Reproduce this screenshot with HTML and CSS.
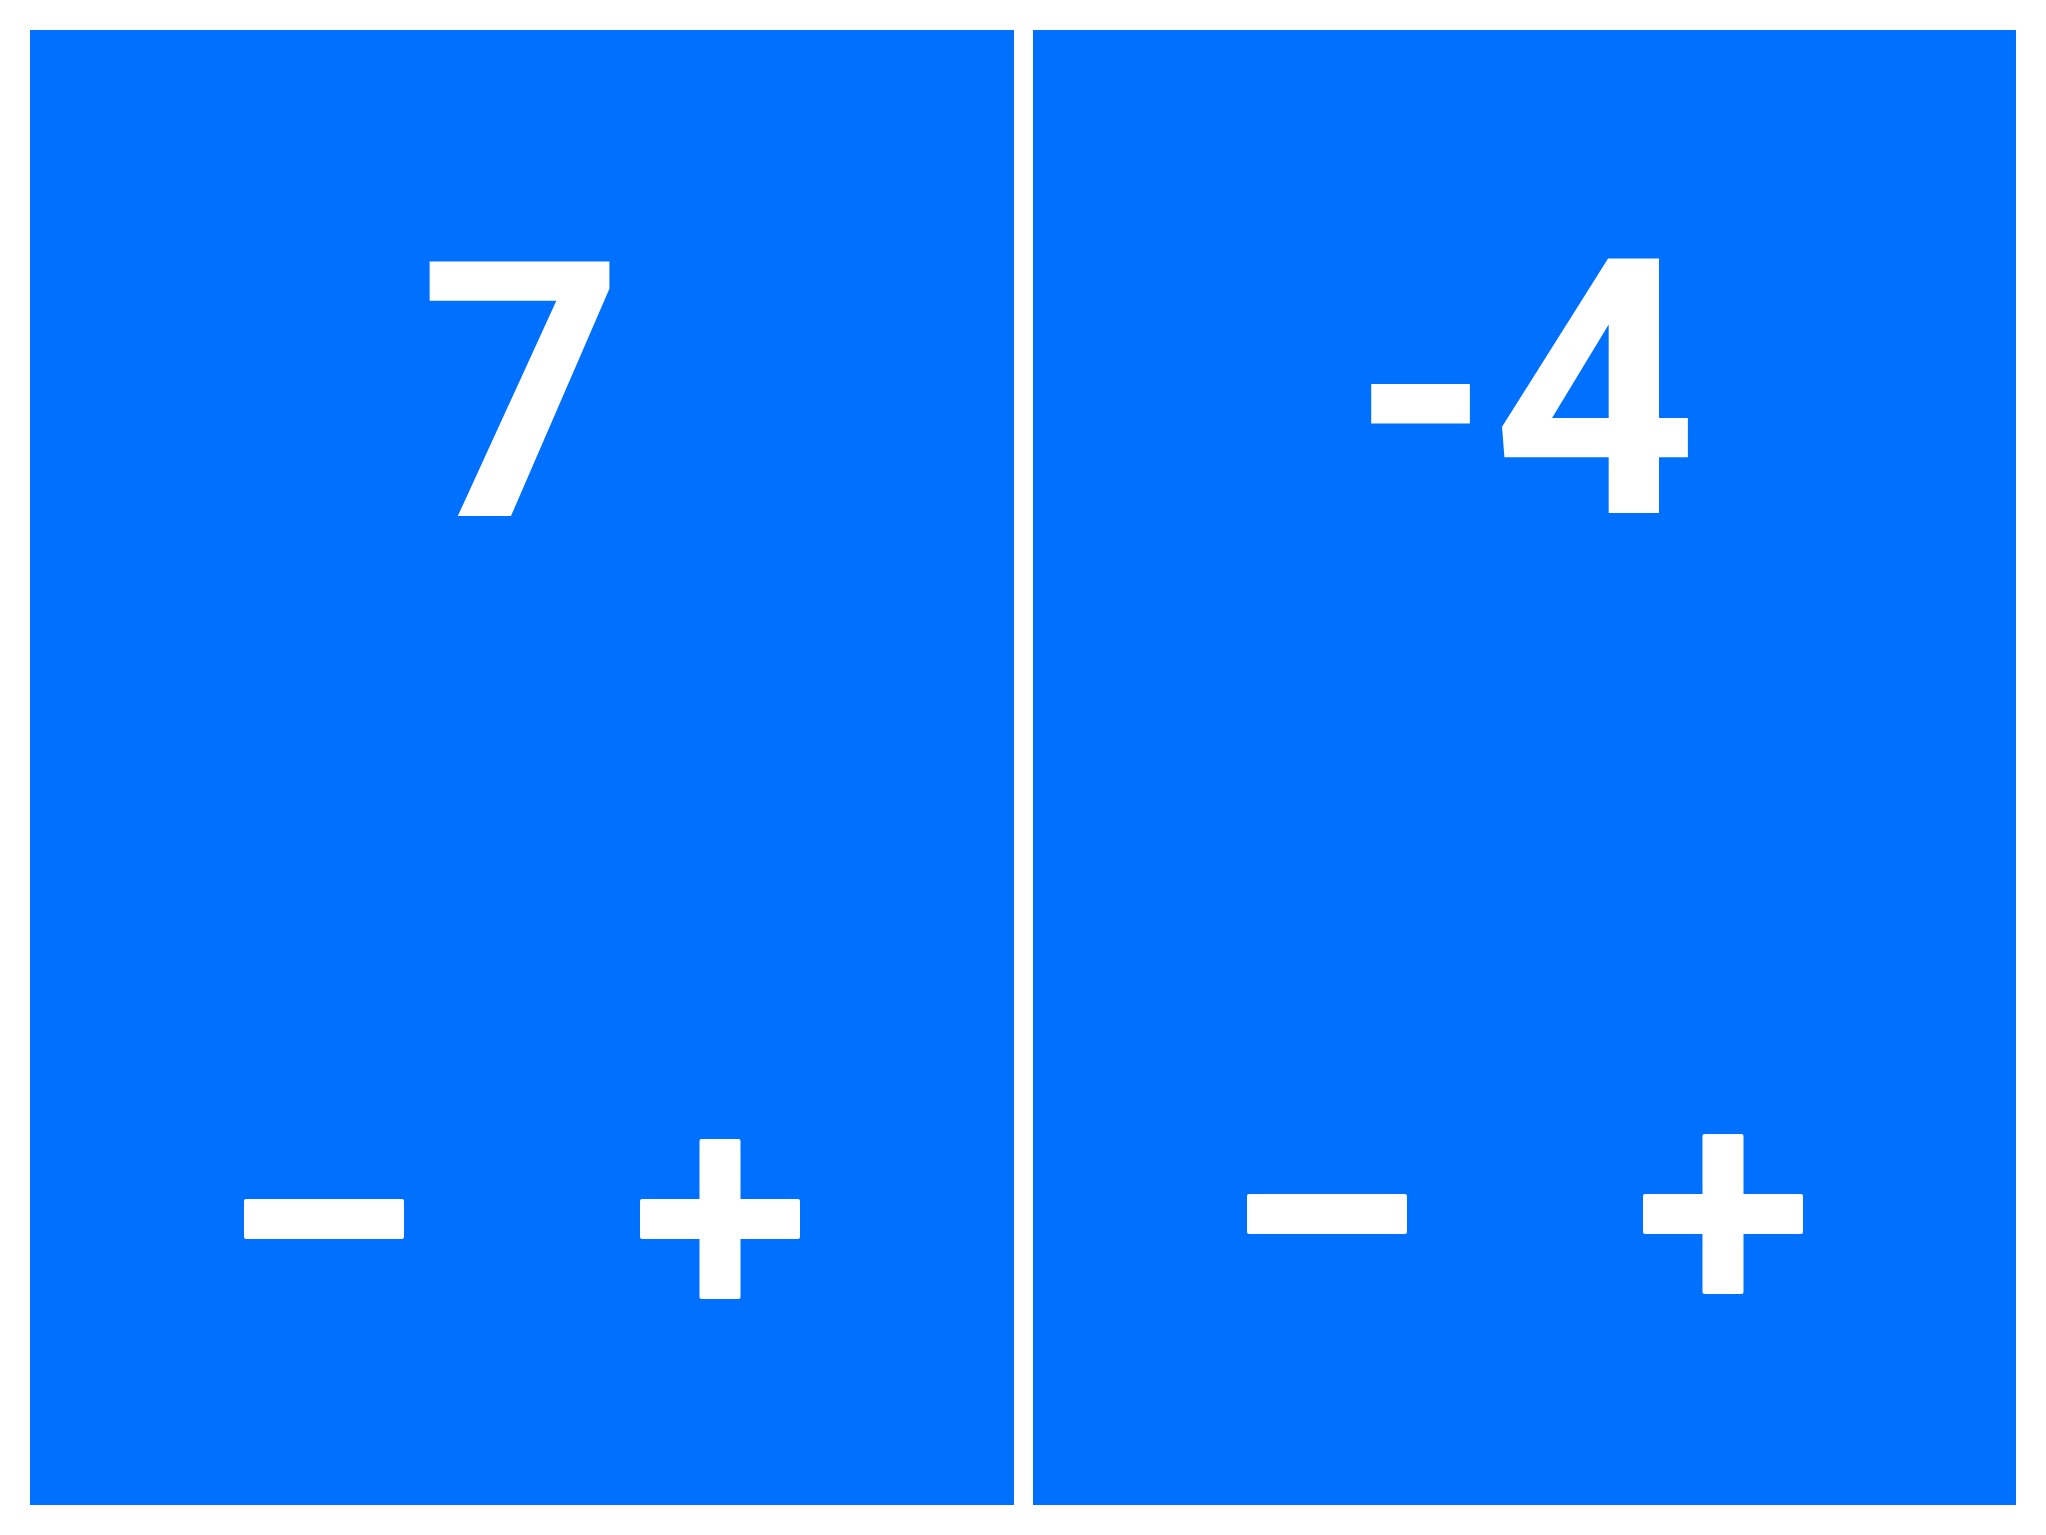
FILE: index.html
```html
<!DOCTYPE html>
<html lang="en">
<head>
    <meta charset="UTF-8">
    <meta name="viewport" content="width=device-width, initial-scale=1.0">
    <title>Counters</title>
    <link rel="stylesheet" href="styles.css">
</head>
<body>

<div class="board">
    <!-- First counter -->
    <div class="counter">
        <div class="counter-value">7</div>
        <div class="counter-controls">
            <button class="btn-step" aria-label="Decrease">
                <svg viewBox="0 0 160 160" width="160" height="160"><rect x="0" y="60" width="160" height="40" rx="2"/></svg>
            </button>
            <button class="btn-step" aria-label="Increase">
                <svg viewBox="0 0 160 160" width="160" height="160"><rect x="0" y="60" width="160" height="40" rx="2"/><rect x="59.5" y="0" width="41" height="160" rx="2"/></svg>
            </button>
        </div>
    </div>

    <!-- Second counter -->
    <div class="counter counter-alt">
        <div class="counter-value">-4</div>
        <div class="counter-controls">
            <button class="btn-step" aria-label="Decrease">
                <svg viewBox="0 0 160 160" width="160" height="160"><rect x="0" y="60" width="160" height="40" rx="2"/></svg>
            </button>
            <button class="btn-step" aria-label="Increase">
                <svg viewBox="0 0 160 160" width="160" height="160"><rect x="0" y="60" width="160" height="40" rx="2"/><rect x="59.5" y="0" width="41" height="160" rx="2"/></svg>
            </button>
        </div>
    </div>
</div>

</body>
</html>
```

FILE: styles.css
```css
html, body {
    margin: 0;
    background-color: white;
    font-family: Roboto, sans-serif;
}

.board {
    display: flex;
    gap: 19px;
    padding: 30px;
    height: 1535px;
    box-sizing: border-box;
}

.counter {
    flex: 1;
    display: flex;
    flex-direction: column;
    background-color: #0070ff;
    color: white;
    padding-top: 185px;
}

.counter-value {
    font-size: 358px;
    font-weight: bold;
    line-height: 358px;
    height: 358px;
    text-align: center;
}

.counter-controls {
    display: flex;
    gap: 236px;
    padding-left: 214px;
    margin-top: 566px;
}

.btn-step {
    padding: 0;
    border: none;
    background: none;
    cursor: pointer;
    width: 160px;
    height: 160px;
}

.btn-step svg {
    display: block;
    fill: white;
}

.counter-alt {
    padding-top: 182px;
}

.counter-alt .counter-controls {
    margin-top: 564px;
}
```
